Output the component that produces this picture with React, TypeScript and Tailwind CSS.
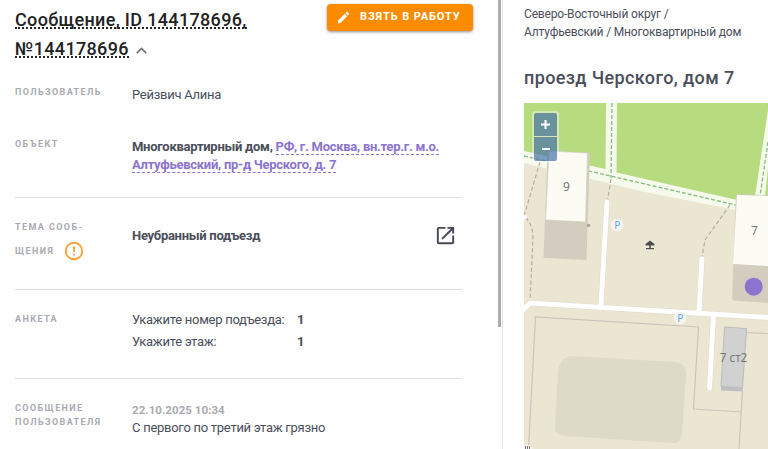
import React from 'react';
import type { ReactNode } from 'react';

type RowProps = {
  label: ReactNode;
  children: ReactNode;
  className?: string;
};

const Row = ({ label, children, className = '' }: RowProps) => (
  <div className={`flex ${className}`}>
    <div className="w-[117px] shrink-0 text-[9px] font-bold leading-[14px] tracking-[1.4px] text-[#a9abb1]">{label}</div>
    <div className="flex-1 text-[13px] leading-[18px] tracking-[-0.27px] text-[#4a4e5a]">{children}</div>
  </div>
);

const answers = [
  { question: 'Укажите номер подъезда:', value: '1' },
  { question: 'Укажите этаж:', value: '1' },
];

const Message = () => (
  <div className="flex h-full w-[503px] shrink-0 border-r border-[#e4e4e6]">
    <div className="w-[498px] shrink-0 pl-[15px] pr-[25px]">
      <div className="flex h-[76px] items-start justify-between pt-[4px]">
        <h1 className="whitespace-nowrap pt-[1px] text-[18px] font-medium leading-[29px] tracking-[0.34px] text-[#222]">
          <span className="inline-block h-[24px] border-b-2 border-dotted border-[#222]">Сообщение, ID 144178696,</span>
          <br />
          <span className="inline-block h-[24px] border-b-2 border-dotted border-[#222]">№144178696</span>
          <svg className="ml-[7px] inline-block" width="11" height="7" viewBox="0 0 11 7" fill="none" stroke="#777" strokeWidth="1.7">
            <path d="M0.8 6.2 5.5 1.4l4.7 4.8" />
          </svg>
        </h1>
        <button className="flex h-[27px] w-[146px] shrink-0 items-center whitespace-nowrap rounded-[4px] bg-[#fb8c00] pl-[9px] text-[11px] font-bold tracking-[0.9px] text-white shadow-[0_1px_3px_rgba(0,0,0,0.45)]">
          <svg className="mr-[9px]" width="15" height="15" viewBox="0 0 24 24" fill="currentColor">
            <path d="M3 17.25V21h3.75L17.81 9.94l-3.75-3.75L3 17.25zM20.71 7.04a1 1 0 0 0 0-1.41l-2.34-2.34a1 1 0 0 0-1.41 0l-1.83 1.83 3.75 3.75 1.83-1.83z" />
          </svg>
          ВЗЯТЬ В РАБОТУ
        </button>
      </div>

      <div className="w-[447px]">
        <Row className="h-[61px] pt-[9px]" label="ПОЛЬЗОВАТЕЛЬ">
          <div className="pt-px">Рейзвич Алина</div>
        </Row>
        <Row className="h-[60px]" label="ОБЪЕКТ">
          <div className="whitespace-nowrap pt-px font-bold">
            Многоквартирный дом,{' '}
            <span className="inline-block h-[17px] border-b border-dashed border-[#8b74cd] text-[#8b74cd]">РФ, г. Москва, вн.тер.г. м.о.</span>
            <br />
            <span className="inline-block h-[17px] border-b border-dashed border-[#8b74cd] text-[#8b74cd]">Алтуфьевский, пр-д Черского, д. 7</span>
          </div>
        </Row>
        <Row
          className="h-[92px] border-t border-[#e2e2e2] pt-[22px]"
          label={
            <>
              ТЕМА СООБ-
              <div className="mt-[6px] flex items-center">
                ЩЕНИЯ
                <svg className="ml-[9px]" width="22" height="22" viewBox="0 0 24 24" fill="#ffa033">
                  <path d="M11 15h2v2h-2zm0-8h2v6h-2zm1-5a10 10 0 1 0 0 20 10 10 0 0 0 0-20zm0 18a8 8 0 1 1 0-16 8 8 0 0 1 0 16z" />
                </svg>
              </div>
            </>
          }
        >
          <div className="flex items-center justify-between pr-[5px] pt-[4px]">
            <b>Неубранный подъезд</b>
            <svg width="23" height="23" viewBox="0 0 24 24" fill="#454955">
              <path d="M19 19H5V5h7V3H5a2 2 0 0 0-2 2v14a2 2 0 0 0 2 2h14a2 2 0 0 0 2-2v-7h-2v7zM14 3v2h3.59l-9.83 9.83 1.41 1.41L19 6.41V10h2V3h-7z" />
            </svg>
          </div>
        </Row>
        <Row className="h-[89px] border-t border-[#dcdcdc] pt-[22px]" label="АНКЕТА">
          <div className="-mt-px">
            {answers.map((answer) => (
              <div className="flex h-[22px]" key={answer.question}>
                <span className="w-[165px]">{answer.question}</span>
                <b>{answer.value}</b>
              </div>
            ))}
          </div>
        </Row>
        <Row className="border-t border-[#e2e2e2] pt-[22px]" label={<>СООБЩЕНИЕ<br />ПОЛЬЗОВАТЕЛЯ</>}>
          <div className="text-[11.5px] font-bold tracking-[0.05px] text-[#a9abb1]">22.10.2025 10:34</div>
          С первого по третий этаж грязно
        </Row>
      </div>
    </div>
    <div className="h-[327px] w-[3px] bg-[#a9abb0]" />
  </div>
);

const MapView = () => (
  <div className="relative h-[346px] w-[244px] overflow-hidden">
    <svg width="244" height="346" viewBox="524 103 244 346" fill="none">
      <rect x="524" y="103" width="244" height="346" fill="#ebe6d2" />
      {/* park */}
      <path d="M524 103h244v105l-32 2-91-18-121-29z" fill="#f6faec" />
      <path d="M524 103h82l-.5 66-81.500-18zM617 103h151v7l-13 86-20 3.500-118.500-27zM768 168l-3 28h3z" fill="#b7db7f" />
      <g stroke="#82bd82" strokeWidth="1.300" strokeDasharray="4 2">
        <path d="M524 156l121 28 91 21" />
        <path d="M612 103l-1 75M768 142l-8 54" />
      </g>
      {/* footpaths */}
      <g stroke="#b5ad9f" strokeWidth="1.200" strokeDasharray="4 2.500">
        <path d="M540 162l-16 54q9 8 9 22l-3 63" />
        <path d="M611 179l-4 24" />
        <path d="M730 205l-25 35-3 17" />
      </g>
      {/* yards */}
      <g stroke="#c9c5bc" strokeWidth="1.200">
        <path d="M528.500 449l7-132 163 10-5 82 48 3" />
        <path d="M746 332.500l22 1M742.500 390l-3.500 59" />
      </g>
      <path d="M573 356l102 6q11 1 11 12l-4 59q-1 11-10 10l-106-7q-12-1-11-9l3-55q2-16 15-16z" fill="#dedac8" />
      {/* roads */}
      <g stroke="#dfdacb" strokeWidth="6" strokeLinecap="round">
        <path d="M607 202l-6 103M702 259l-3 52M713.500 314l-4 74M522 311l8-8 240 14.500" />
      </g>
      <g stroke="#fff" strokeWidth="5" strokeLinecap="round">
        <path d="M607 202l-6 103M702 259l-3 52M713.500 314l-4 74M522 311l8-8 240 14.500" />
      </g>
      <circle cx="525" cy="217" r="2" fill="#fff" />
      {/* buildings */}
      <path d="M547.500 152q0-1 1-1l40 2q1.500 0 1.500 1l-3.500 105q0 1-1 1l-41-2q-1 0-1-1z" fill="#d3cdc0" />
      <path d="M549 151l38.500 2-2 69-40-2z" fill="#fcfcf4" stroke="#d3cdc0" strokeWidth=".7" />
      <circle cx="588.500" cy="225.500" r="1.800" fill="#aaa69d" />
      <path d="M736 194l32 1v108l-34-2.500q-2 0-2-2z" fill="#d3cdc0" />
      <path d="M737 195l31 1v70l-35-2z" fill="#fcfcf4" />
      <path d="M724.500 327l22 1.500-4 63-21.500-1z" fill="#bfbfbf" />
      <path d="M724.500 327l22 1.500-4 59-21.500-1z" fill="#d1d1d1" stroke="#bdbdbd" />
      <g fontFamily="Noto Sans, sans-serif" fontSize="12" fill="#777" textAnchor="middle">
        <text x="566.500" y="191">9</text>
        <text x="754.500" y="235">7</text>
        <text x="733.500" y="362" fontSize="11.700">7 ст2</text>
      </g>
      {/* parking */}
      <circle cx="617" cy="225" r="6.300" fill="#f6f4ec" />
      <circle cx="680" cy="318" r="6.300" fill="#f6f4ec" />
      <g fontFamily="Noto Sans, sans-serif" fontSize="10" fill="#52aef0" textAnchor="middle">
        <text x="617.300" y="228.500">P</text>
        <text x="680.300" y="321.500">P</text>
      </g>
      {/* gazebo */}
      <path d="M650 240.500l4.500 3.500v1.500h-3.700v2.500h3.200v1.200h-8v-1.200h3.200v-2.500h-3.700v-1.500z" fill="#4d4d4d" stroke="#f7f4e8" strokeWidth=".8" paintOrder="stroke" />
      <circle cx="527.500" cy="450" r="5" fill="#f6f4ec" />
      <path d="M525.500 446v3M527.500 446v3M529.500 446v3" stroke="#777" />
      <circle cx="753.700" cy="286.700" r="9" fill="#8b74cd" />
    </svg>
    <div className="absolute left-[8px] top-[8px] flex flex-col gap-px rounded-[3px] bg-white/40 p-[2px] text-white">
      <button className="flex h-[23px] w-[23px] items-center justify-center rounded-t-[2px] bg-[rgba(0,60,136,0.5)]">
        <svg width="9" height="9" viewBox="0 0 9 9" stroke="currentColor" strokeWidth="2"><path d="M4.500 0v9M0 4.500h9" /></svg>
      </button>
      <button className="flex h-[24px] w-[23px] items-center justify-center rounded-b-[2px] bg-[rgba(0,60,136,0.5)]">
        <svg width="8" height="9" viewBox="0 0 8 9" stroke="currentColor" strokeWidth="2"><path d="M0 4h8" /></svg>
      </button>
    </div>
  </div>
);

const App = () => {
  return (
    <div className="flex h-[449px] w-[768px] overflow-hidden bg-[#fefefe] font-['Roboto',sans-serif]">
      <Message />
      <div className="pl-[21px] pt-[5px] text-[#4a4e5a]">
        <div className="h-[58px] whitespace-nowrap text-[12px] leading-[18px] tracking-[-0.17px]">
          Северо-Восточный округ /<br />
          Алтуфьевский / Многоквартирный дом
        </div>
        <h2 className="h-[40px] whitespace-nowrap text-[18px] font-medium leading-[29px] tracking-[0.38px]">проезд Черского, дом 7</h2>
        <MapView />
      </div>
    </div>
  );
};

export default App;
